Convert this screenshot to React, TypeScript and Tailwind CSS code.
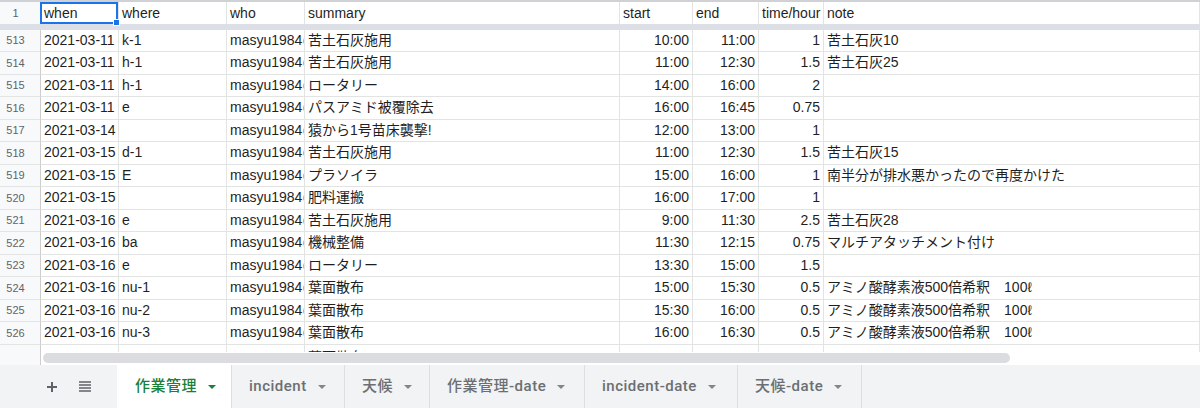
import React from "react";

type Row = {
  n: number | null;
  when: string;
  where: string;
  who: string;
  summary: string;
  start: string;
  end: string;
  hours: string;
  note: string;
};

const WHO = "masyu1984@gmail.com";

// Work log rows shown in the sheet (the last one is mostly under the scrollbar)
const rows: Row[] = [
  { n: 513, when: "2021-03-11", where: "k-1", who: WHO, summary: "苦土石灰施用", start: "10:00", end: "11:00", hours: "1", note: "苦土石灰10" },
  { n: 514, when: "2021-03-11", where: "h-1", who: WHO, summary: "苦土石灰施用", start: "11:00", end: "12:30", hours: "1.5", note: "苦土石灰25" },
  { n: 515, when: "2021-03-11", where: "h-1", who: WHO, summary: "ロータリー", start: "14:00", end: "16:00", hours: "2", note: "" },
  { n: 516, when: "2021-03-11", where: "e", who: WHO, summary: "パスアミド被覆除去", start: "16:00", end: "16:45", hours: "0.75", note: "" },
  { n: 517, when: "2021-03-14", where: "", who: WHO, summary: "猿から1号苗床襲撃!", start: "12:00", end: "13:00", hours: "1", note: "" },
  { n: 518, when: "2021-03-15", where: "d-1", who: WHO, summary: "苦土石灰施用", start: "11:00", end: "12:30", hours: "1.5", note: "苦土石灰15" },
  { n: 519, when: "2021-03-15", where: "E", who: WHO, summary: "プラソイラ", start: "15:00", end: "16:00", hours: "1", note: "南半分が排水悪かったので再度かけた" },
  { n: 520, when: "2021-03-15", where: "", who: WHO, summary: "肥料運搬", start: "16:00", end: "17:00", hours: "1", note: "" },
  { n: 521, when: "2021-03-16", where: "e", who: WHO, summary: "苦土石灰施用", start: "9:00", end: "11:30", hours: "2.5", note: "苦土石灰28" },
  { n: 522, when: "2021-03-16", where: "ba", who: WHO, summary: "機械整備", start: "11:30", end: "12:15", hours: "0.75", note: "マルチアタッチメント付け" },
  { n: 523, when: "2021-03-16", where: "e", who: WHO, summary: "ロータリー", start: "13:30", end: "15:00", hours: "1.5", note: "" },
  { n: 524, when: "2021-03-16", where: "nu-1", who: WHO, summary: "葉面散布", start: "15:00", end: "15:30", hours: "0.5", note: "アミノ酸酵素液500倍希釈　100ℓ" },
  { n: 525, when: "2021-03-16", where: "nu-2", who: WHO, summary: "葉面散布", start: "15:30", end: "16:00", hours: "0.5", note: "アミノ酸酵素液500倍希釈　100ℓ" },
  { n: 526, when: "2021-03-16", where: "nu-3", who: WHO, summary: "葉面散布", start: "16:00", end: "16:30", hours: "0.5", note: "アミノ酸酵素液500倍希釈　100ℓ" },
  { n: null, when: "", where: "", who: "", summary: "葉面散布", start: "", end: "", hours: "", note: "" },
];

const headers = ["when", "where", "who", "summary", "start", "end", "time/hour", "note"];

const tabs = [
  { label: "作業管理", width: "w-[115px]", active: true },
  { label: "incident", width: "w-[113px]", active: false },
  { label: "天候", width: "w-[85px]", active: false },
  { label: "作業管理-date", width: "w-[155px]", active: false },
  { label: "incident-date", width: "w-[153px]", active: false },
  { label: "天候-date", width: "w-[124px]", active: false },
];

const gridCols = "grid grid-cols-[41px_78px_108px_78px_315px_73px_66px_65px_1fr]";
const cell = "flex items-center px-[3px] overflow-hidden whitespace-nowrap border-r border-b border-[#e2e3e3]";
const rowNum =
  "flex items-center justify-center pr-[9px] bg-[#f8f9fa] text-[11px] text-[#5f6368] border-b border-[#e2e3e3] border-r border-r-[#cdcdcd]";

const Arrow: React.FC<{ color: string }> = ({ color }) => (
  <svg width="8" height="4" viewBox="0 0 8 4" className="shrink-0">
    <path d="M0 0h8L4 4z" fill={color} />
  </svg>
);

const App: React.FC = () => {
  return (
    <div className="w-[1200px] h-[408px] bg-white overflow-hidden flex flex-col font-['Liberation_Sans','Noto_Sans_CJK_JP',sans-serif] text-[14px] text-[#1f1f1f]">
      {/* Grid area */}
      <div className="h-[352px] overflow-hidden">
        {/* bottom edge of the column letters */}
        <div className="h-[2px] bg-[#cfd1d4]" />

        {/* Frozen header row */}
        <div className={`${gridCols} h-[22px]`}>
          <div className="flex items-center justify-center pr-[9px] bg-[#f8f9fa] text-[11px] text-[#5f6368] border-r border-[#cdcdcd]">
            1
          </div>
          {headers.map((h, i) => (
            <div key={h} className="relative flex items-center px-[3px] border-r border-[#e2e3e3] whitespace-nowrap overflow-visible">
              {h}
              {i === 0 && (
                <div className="absolute -left-[1px] top-0 right-0 bottom-0 border-2 border-[#1a73e8] z-10">
                  <div className="absolute -right-[4px] -bottom-[4px] w-[7px] h-[7px] bg-[#1a73e8] border border-white" />
                </div>
              )}
            </div>
          ))}
        </div>

        {/* Freeze bar */}
        <div className="h-[5.5px] bg-[#dcdfe6]" />

        {/* Data rows */}
        {rows.map((r, i) => (
          <div key={i} className={`${gridCols} h-[22.5px]`}>
            <div className={rowNum}>{r.n}</div>
            <div className={cell}>{r.when}</div>
            <div className={cell}>{r.where}</div>
            <div className={cell}>{r.who}</div>
            <div className={`${cell} ${r.n === null ? "pt-[5px]" : ""}`}>{r.summary}</div>
            <div className={`${cell} justify-end`}>{r.start}</div>
            <div className={`${cell} justify-end`}>{r.end}</div>
            <div className={`${cell} justify-end`}>{r.hours}</div>
            <div className={cell}>{r.note}</div>
          </div>
        ))}
      </div>

      {/* Horizontal scrollbar */}
      <div className="h-[13px] flex">
        <div className="w-[41px] bg-[#f8f9fa] border-r border-[#cdcdcd]" />
        <div className="flex-1 pl-[2px] pt-[1px]">
          <div className="w-[967px] h-[10px] rounded-full bg-[#dadce0]" />
        </div>
      </div>

      {/* Sheet tabs */}
      <div className="h-[43px] bg-[#f1f3f4] flex font-['Roboto','Noto_Sans_CJK_JP',sans-serif] font-medium text-[15px] tracking-[0.5px]">
        <div className="w-[117px] flex items-center pl-[47px] gap-[22px]">
          <svg width="10" height="10" viewBox="0 0 10 10">
            <path d="M5 0v10M0 5h10" stroke="#5f6368" strokeWidth="2" />
          </svg>
          <svg width="12" height="11" viewBox="0 0 12 11">
            <path d="M0 1h12M0 4h12M0 7h12M0 10h12" stroke="#5f6368" strokeWidth="1.6" />
          </svg>
        </div>
        {tabs.map((t) => (
          <div
            key={t.label}
            className={`${t.width} flex items-center gap-[11px] border-r border-[#dcdee1] whitespace-nowrap ${
              t.active ? "bg-white text-[#188038] pl-[18px]" : "text-[#6b6f73] pl-[17px]"
            }`}
          >
            {t.label}
            <Arrow color={t.active ? "#188038" : "#80868b"} />
          </div>
        ))}
      </div>
    </div>
  );
};

export default App;
